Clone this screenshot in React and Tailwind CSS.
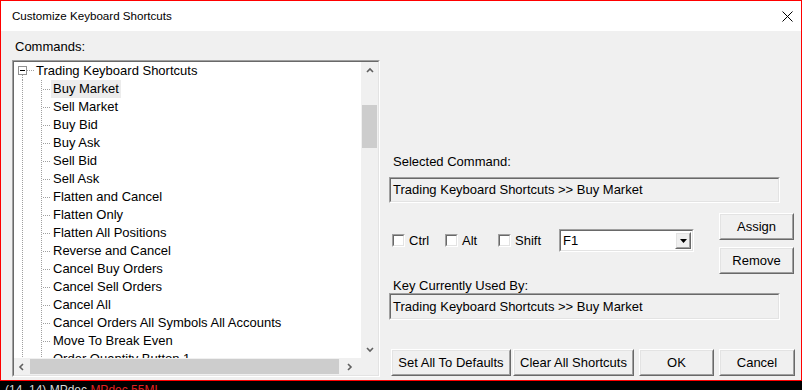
import React from "react";

const FONT = { fontFamily: '"Liberation Sans", Arial, sans-serif' };

const COMMANDS = [
  "Buy Market",
  "Sell Market",
  "Buy Bid",
  "Buy Ask",
  "Sell Bid",
  "Sell Ask",
  "Flatten and Cancel",
  "Flatten Only",
  "Flatten All Positions",
  "Reverse and Cancel",
  "Cancel Buy Orders",
  "Cancel Sell Orders",
  "Cancel All",
  "Cancel Orders All Symbols All Accounts",
  "Move To Break Even",
  "Order Quantity Button 1",
  "Order Quantity Button 2",
];

// classic windows sunken edge (two nested 1px borders)
function Sunken({ className = "", innerClassName = "", children }) {
  return (
    <div className={`border border-t-[#a0a0a0] border-l-[#a0a0a0] border-b-white border-r-white ${className}`}>
      <div className={`h-full w-full border border-t-[#696969] border-l-[#696969] border-b-[#e3e3e3] border-r-[#e3e3e3] ${innerClassName}`}>
        {children}
      </div>
    </div>
  );
}

function Btn({ className = "", children }) {
  return (
    <div className={`border border-t-white border-l-white border-b-[#696969] border-r-[#696969] ${className}`}>
      <div className="h-full w-full border border-t-[#e3e3e3] border-l-[#e3e3e3] border-b-[#a0a0a0] border-r-[#a0a0a0] bg-[#f0f0f0] flex items-center justify-center text-[13px] text-black">
        {children}
      </div>
    </div>
  );
}

function Check({ label, className = "" }) {
  return (
    <div className={`flex items-center ${className}`}>
      <Sunken className="w-[13px] h-[13px]" innerClassName="bg-white" />
      <span className="ml-[4px] text-[13px] text-black">{label}</span>
    </div>
  );
}

function Chevron({ dir }) {
  const paths = {
    up: "M1 5 L4 2 L7 5",
    down: "M1 2 L4 5 L7 2",
    left: "M5 1 L2 4 L5 7",
    right: "M2 1 L5 4 L2 7",
  };
  return (
    <svg width="8" height="8" viewBox="0 0 8 8">
      <path d={paths[dir]} fill="none" stroke="#606060" strokeWidth="1.6" />
    </svg>
  );
}

function RootRow() {
  return (
    <div className="flex h-[18px] items-center">
      <svg width="21" height="18" className="shrink-0">
        <line x1="8.5" y1="13" x2="8.5" y2="18" stroke="#a0a0a0" strokeDasharray="1 1" />
        <line x1="13" y1="8.5" x2="21" y2="8.5" stroke="#a0a0a0" strokeDasharray="1 1" />
        <rect x="4.5" y="4.5" width="8" height="8" fill="white" stroke="#919191" />
        <line x1="6" y1="8.5" x2="11" y2="8.5" stroke="#000" />
      </svg>
      <span className="pl-[1px] leading-[18px]">Trading Keyboard Shortcuts</span>
    </div>
  );
}

function ChildRow({ name, selected }) {
  return (
    <div className="flex h-[18px] items-center">
      <svg width="37" height="18" className="shrink-0">
        <line x1="8.5" y1="0" x2="8.5" y2="18" stroke="#a0a0a0" strokeDasharray="1 1" />
        <line x1="27.5" y1="0" x2="27.5" y2="18" stroke="#a0a0a0" strokeDasharray="1 1" />
        <line x1="29" y1="9.5" x2="37" y2="9.5" stroke="#a0a0a0" strokeDasharray="1 1" />
      </svg>
      <span className={`px-[2px] leading-[18px] whitespace-nowrap ${selected ? "bg-[#ececec]" : ""}`}>
        {name}
      </span>
    </div>
  );
}

function CommandTree() {
  return (
    <Sunken className="w-[368px] h-[317px]" innerClassName="bg-white flex flex-col">
      <div className="flex flex-1 min-h-0">
        <div className="flex-1 overflow-hidden text-[13px] text-black">
          <RootRow />
          {COMMANDS.map((c, i) => (
            <ChildRow key={c} name={c} selected={i === 0} />
          ))}
        </div>
        {/* vertical scrollbar */}
        <div className="w-[17px] bg-[#f0f0f0] flex flex-col items-center">
          <div className="h-[17px] flex items-center justify-center">
            <Chevron dir="up" />
          </div>
          <div className="flex-1 w-full px-[1px] pt-[26px]">
            <div className="h-[43px] bg-[#cdcdcd]" />
          </div>
          <div className="h-[17px] flex items-center justify-center">
            <Chevron dir="down" />
          </div>
        </div>
      </div>
      {/* horizontal scrollbar */}
      <div className="flex h-[17px]">
        <div className="flex-1 bg-[#f0f0f0] flex items-center">
          <div className="w-[16px] flex justify-center">
            <Chevron dir="left" />
          </div>
          <div className="flex-1 h-[15px] bg-[#cdcdcd]" />
          <div className="w-[22px] flex justify-center">
            <Chevron dir="right" />
          </div>
        </div>
        <div className="w-[17px] bg-[#f0f0f0]" />
      </div>
    </Sunken>
  );
}

export default function App() {
  return (
    <div className="w-[802px] h-[390px] bg-black overflow-hidden flex flex-col" style={FONT}>
      <div className="h-[381px] border border-[#ff0000] bg-[#f0f0f0] flex flex-col">
        {/* title bar */}
        <div className="h-[30px] bg-white flex items-center justify-between pl-[11px] pr-[8px]">
          <span className="text-[11.6px] text-black">Customize Keyboard Shortcuts</span>
          <svg width="11" height="11" viewBox="0 0 11 11">
            <path d="M0.5 0.5 L10.5 10.5 M10.5 0.5 L0.5 10.5" stroke="#000" strokeWidth="1" />
          </svg>
        </div>

        <div className="flex flex-1">
          {/* left: commands */}
          <div className="w-[379px] pl-[11px] pt-[8px]">
            <div className="text-[13px] leading-[16px] text-black pl-[3px] mb-[5px]">Commands:</div>
            <CommandTree />
          </div>

          {/* right: editor */}
          <div className="flex-1 pl-[9px] pt-[123px] text-[13px] text-black">
            <div className="leading-[16px] pl-[4px]">Selected Command:</div>
            <Sunken className="mt-[7px] w-[391px] h-[26px]" innerClassName="flex items-center pl-[2px]">
              Trading Keyboard Shortcuts &gt;&gt; Buy Market
            </Sunken>

            <div className="flex mt-[10px]">
              <div className="w-[330px] pt-[16px]">
                <div className="flex items-center h-[23px] pl-[3px]">
                  <Check label="Ctrl" className="w-[53px]" />
                  <Check label="Alt" className="w-[53px]" />
                  <Check label="Shift" className="w-[61px]" />
                  <Sunken className="w-[135px] h-[23px]" innerClassName="bg-white flex items-center justify-between pl-[2px] pr-[1px]">
                    <span>F1</span>
                    <Btn className="w-[16px] h-[17px]">
                      <svg width="7" height="4" viewBox="0 0 7 4">
                        <path d="M0 0 H7 L3.5 4 Z" fill="#000" />
                      </svg>
                    </Btn>
                  </Sunken>
                </div>
              </div>
              <div className="flex flex-col gap-[7px]">
                <Btn className="w-[75px] h-[27px]">Assign</Btn>
                <Btn className="w-[75px] h-[27px]">Remove</Btn>
              </div>
            </div>

            <div className="mt-[5px] leading-[14px] pl-[4px]">Key Currently Used By:</div>
            <Sunken className="w-[391px] h-[27px]" innerClassName="flex items-center pl-[2px]">
              Trading Keyboard Shortcuts &gt;&gt; Buy Market
            </Sunken>

            <div className="flex mt-[29px] ml-[2px]">
              <Btn className="w-[120px] h-[27px]">Set All To Defaults</Btn>
              <Btn className="ml-[2px] w-[121px] h-[27px]">Clear All Shortcuts</Btn>
              <Btn className="ml-[5px] w-[75px] h-[27px]">OK</Btn>
              <Btn className="ml-[5px] w-[76px] h-[27px]">Cancel</Btn>
            </div>
          </div>
        </div>
      </div>

      {/* app behind the dialog */}
      <div className="h-[9px] overflow-hidden pl-[5px] text-[12px] leading-[12px]">
        <div className="mt-[3px] whitespace-nowrap">
          <span className="text-[#d8d8d8]">(14, 14) MPdec </span>
          <span className="text-[#e02020]">MPdec 55ML</span>
        </div>
      </div>
    </div>
  );
}
